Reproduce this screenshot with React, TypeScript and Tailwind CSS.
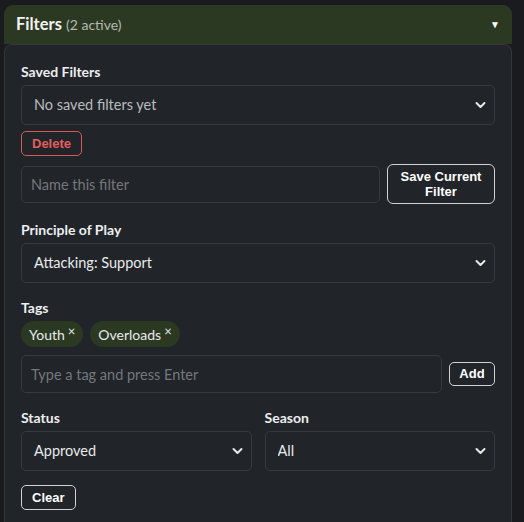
import React from "react";

const Chevron = () => (
  <svg
    className="pointer-events-none absolute right-[9px] top-1/2 -translate-y-1/2"
    width="11"
    height="8"
    viewBox="0 0 11 8"
    fill="none"
  >
    <path d="M1.5 2l4 4 4-4" stroke="#e6e8ea" strokeWidth="2" strokeLinecap="round" strokeLinejoin="round" />
  </svg>
);

const Select = ({ value, muted }: { value: string; muted?: boolean }) => (
  <div className="relative">
    <select
      defaultValue={value}
      className={
        "h-10 w-full appearance-none rounded-[5px] border border-[#363a40] bg-[#212429] pl-3 pr-8 text-[14.5px] outline-none " +
        (muted ? "text-[#b9bcc0]" : "text-[#e8eaec]")
      }
    >
      <option>{value}</option>
    </select>
    <Chevron />
  </div>
);

const Label = ({ children }: { children: React.ReactNode }) => (
  <div className="mb-1 text-[14px] font-bold leading-[18px] text-[#eceef0]">{children}</div>
);

const Tag = ({ name }: { name: string }) => (
  <span className="flex h-[26px] items-center rounded-full bg-[#2b3822] pl-2 pr-2 text-[14px] text-[#e8eaec]">
    {name}
    <span className="ml-[3px] -mt-[6px] text-[13px] leading-none">×</span>
  </span>
);

const App = () => {
  return (
    <div className="min-h-[522px] w-[524px] bg-[#1a1b1e] pl-1 pr-3 pt-[5px] font-['Lato',sans-serif]">
      <div className="flex h-[39px] items-center justify-between rounded-t-[9px] bg-[#2c3922] pl-3 pr-3">
        <div className="text-[#f2f3f4]">
          <span className="text-[16.5px] font-bold">Filters</span>{" "}
          <span className="text-[14px] text-[#b5b8b2]">(2 active)</span>
        </div>
        <span className="text-[10px] text-white">▼</span>
      </div>

      <div className="h-[478px] rounded-t-[8px] border border-b-0 border-[#33363c] bg-[#212429] px-4 pt-[18px]">
        <Label>Saved Filters</Label>
        <Select value="No saved filters yet" muted />

        <button className="mt-[6px] h-[25px] rounded-[5px] border border-[#d9595a] px-[10px] font-['Liberation_Sans',sans-serif] text-[13px] font-bold text-[#e35d5e]">
          Delete
        </button>

        <div className="mt-[8px] flex items-center gap-[7px]">
          <input
            placeholder="Name this filter"
            className="h-[37px] flex-1 rounded-[5px] border border-[#363a40] bg-[#212429] px-[9px] text-[14.5px] text-white outline-none placeholder:text-[#74787d]"
          />
          <button className="h-[40px] w-[108px] rounded-[6px] border border-[#d0d2d4] font-['Liberation_Sans',sans-serif] text-[13px] font-bold leading-[15px] text-white">
            Save Current
            <br />
            Filter
          </button>
        </div>

        <div className="mt-[17px]">
          <Label>Principle of Play</Label>
          <Select value="Attacking: Support" />
        </div>

        <div className="mt-[16px]">
          <Label>Tags</Label>
          <div className="flex gap-[7px]">
            <Tag name="Youth" />
            <Tag name="Overloads" />
          </div>
          <div className="mt-2 flex items-center gap-[7px]">
            <input
              placeholder="Type a tag and press Enter"
              className="h-[38px] flex-1 rounded-[5px] border border-[#363a40] bg-[#212429] px-[9px] text-[14.5px] text-white outline-none placeholder:text-[#74787d]"
            />
            <button className="h-[24px] w-[46px] rounded-[5px] border border-[#d0d2d4] font-['Liberation_Sans',sans-serif] text-[13px] font-bold text-white">
              Add
            </button>
          </div>
        </div>

        <div className="mt-[16px] grid grid-cols-2 gap-[13px]">
          <div>
            <Label>Status</Label>
            <Select value="Approved" />
          </div>
          <div>
            <Label>Season</Label>
            <Select value="All" />
          </div>
        </div>

        <button className="mt-[14px] h-[25px] rounded-[5px] border border-[#d0d2d4] px-[10px] font-['Liberation_Sans',sans-serif] text-[13px] font-bold text-white">
          Clear
        </button>
      </div>
    </div>
  );
};

export default App;
